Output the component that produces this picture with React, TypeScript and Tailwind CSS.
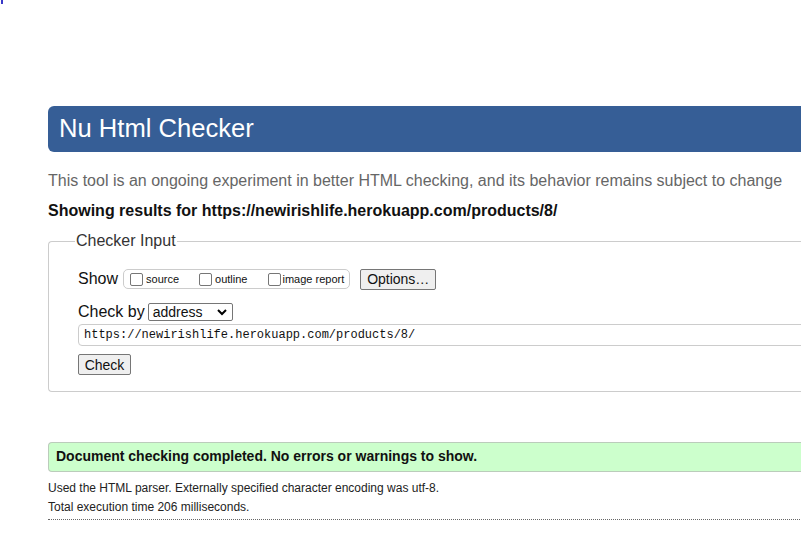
export default function App(): React.JSX.Element {
    return (
        <div className="w-[801px] h-[549px] overflow-hidden bg-white font-['Liberation_Sans',Arial,sans-serif] text-[#111]">
            {/* tiny focus mark top-left */}
            <div className="ml-px w-[2px] h-[4px] bg-[#3a3ac8]" />

            <div className="w-[1000px] pl-[48px] pt-[102px]">
                {/* header */}
                <div className="h-[46px] rounded-l-[6px] bg-[#365e96] pl-[11px] flex items-center">
                    <h1 className="text-[25.6px] text-white leading-none">Nu Html Checker</h1>
                </div>

                <p className="mt-[19px] text-[16px] text-[#666] leading-[20px]">
                    This tool is an ongoing experiment in better HTML checking, and its behavior remains subject to change
                </p>
                <p className="mt-[10px] text-[16px] font-bold text-[#111] leading-[20px]">
                    Showing results for https://newirishlife.herokuapp.com/products/8/
                </p>

                {/* checker input */}
                <fieldset className="mt-[10px] rounded-l-[4px] border border-r-0 border-[#ccc] pl-[29px] pt-[16px] pb-[14px]">
                    <legend className="-ml-[3px] -mb-[1px] px-[1px] text-[16px] text-[#333] leading-[20px]">Checker Input</legend>

                    <div className="flex items-center h-[22px] mt-[2px]">
                        <span className="text-[16px] mr-[5px]">Show</span>
                        <div className="flex items-center h-[20px] rounded-[5px] border border-[#ccc] pl-[6px] pr-[5px] text-[11px] leading-none">
                            <Box />
                            <span className="ml-[3px]">source</span>
                            <span className="ml-[20px]"><Box /></span>
                            <span className="ml-[3px]">outline</span>
                            <span className="ml-[21px]"><Box /></span>
                            <span className="ml-px">image report</span>
                        </div>
                        <button className="ml-[10px] h-[21px] w-[76px] rounded-[2px] border border-[#767676] bg-[#efefef] text-[14px] leading-none">
                            Options…
                        </button>
                    </div>

                    <div className="flex items-center mt-[13px] h-[18px]">
                        <span className="text-[16px] mr-[3px]">Check by</span>
                        <div className="flex items-center justify-between h-[18px] w-[85px] rounded-[2px] border border-[#767676] pl-[4px] pr-[5px] text-[14px]">
                            <span className="leading-none">address</span>
                            <svg width="10" height="7" viewBox="0 0 10 7" fill="none" stroke="#000" strokeWidth="2">
                                <path d="M1 1l4 4 4-4" />
                            </svg>
                        </div>
                    </div>

                    <div className="mt-[3px] h-[22px] rounded-[4px] border border-[#ccc] pl-[5px] flex items-center font-['Liberation_Mono',monospace] text-[12px]">
                        https://newirishlife.herokuapp.com/products/8/
                    </div>

                    <button className="mt-[8px] h-[21px] w-[53px] rounded-[2px] border border-[#767676] bg-[#efefef] text-[14px] leading-none">
                        Check
                    </button>
                </fieldset>

                {/* result */}
                <div className="mt-[50px] h-[30px] rounded-l-[4px] border border-r-0 border-[#bbccbb] bg-[#ccffcc] pl-[7px] flex items-center text-[14px] font-bold">
                    Document checking completed. No errors or warnings to show.
                </div>
                <p className="mt-[7px] text-[12px] leading-[19px] text-[#222]">
                    Used the HTML parser. Externally specified character encoding was utf-8.
                </p>
                <p className="text-[12px] leading-[19px] text-[#222]">Total execution time 206 milliseconds.</p>
                <div className="mt-[2px] border-t border-dotted border-[#666]" />
            </div>
        </div>
    )
}

function Box(): React.JSX.Element {
    return <span className="inline-block w-[13px] h-[13px] rounded-[2px] border border-[#767676] bg-white align-middle" />
}
